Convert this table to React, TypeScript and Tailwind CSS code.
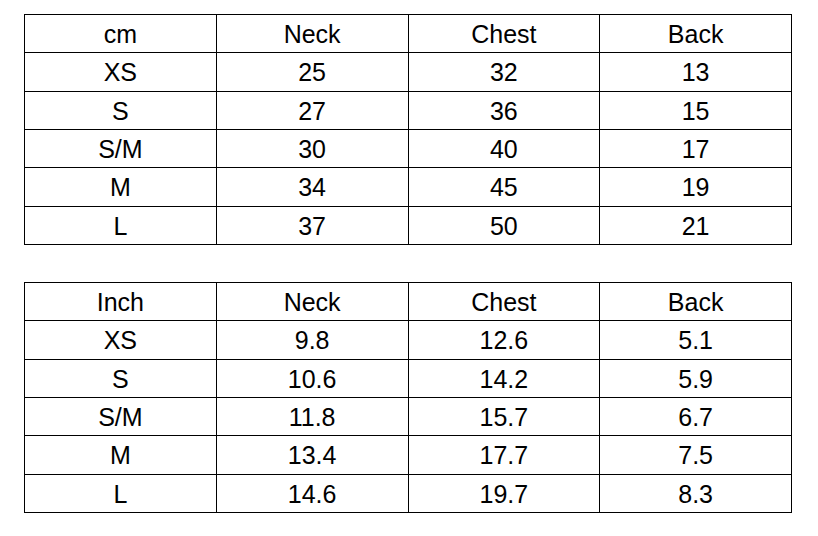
import React from 'react';

type Row = [string, string, string, string];

const cmRows: Row[] = [
  ['cm', 'Neck', 'Chest', 'Back'],
  ['XS', '25', '32', '13'],
  ['S', '27', '36', '15'],
  ['S/M', '30', '40', '17'],
  ['M', '34', '45', '19'],
  ['L', '37', '50', '21'],
];

const inchRows: Row[] = [
  ['Inch', 'Neck', 'Chest', 'Back'],
  ['XS', '9.8', '12.6', '5.1'],
  ['S', '10.6', '14.2', '5.9'],
  ['S/M', '11.8', '15.7', '6.7'],
  ['M', '13.4', '17.7', '7.5'],
  ['L', '14.6', '19.7', '8.3'],
];

function SizeTable({ rows }: { rows: Row[] }) {
  return (
    <table className="w-[768px] table-fixed border-collapse border border-black">
      <tbody>
        {rows.map((row, i) => (
          <tr key={i} className="h-[38.33px]">
            {row.map((cell, j) => (
              <td key={j} className="border border-black px-0 pb-0 pt-[2px] text-center align-middle text-[25px] leading-none text-black">
                {cell}
              </td>
            ))}
          </tr>
        ))}
      </tbody>
    </table>
  );
}

export default function App() {
  return (
    <div className="flex h-[536px] w-[818px] flex-col gap-[37px] bg-white pl-[24px] pt-[14px]" style={{ fontFamily: '"Liberation Sans", Arial, sans-serif' }}>
      <SizeTable rows={cmRows} />
      <SizeTable rows={inchRows} />
    </div>
  );
}
